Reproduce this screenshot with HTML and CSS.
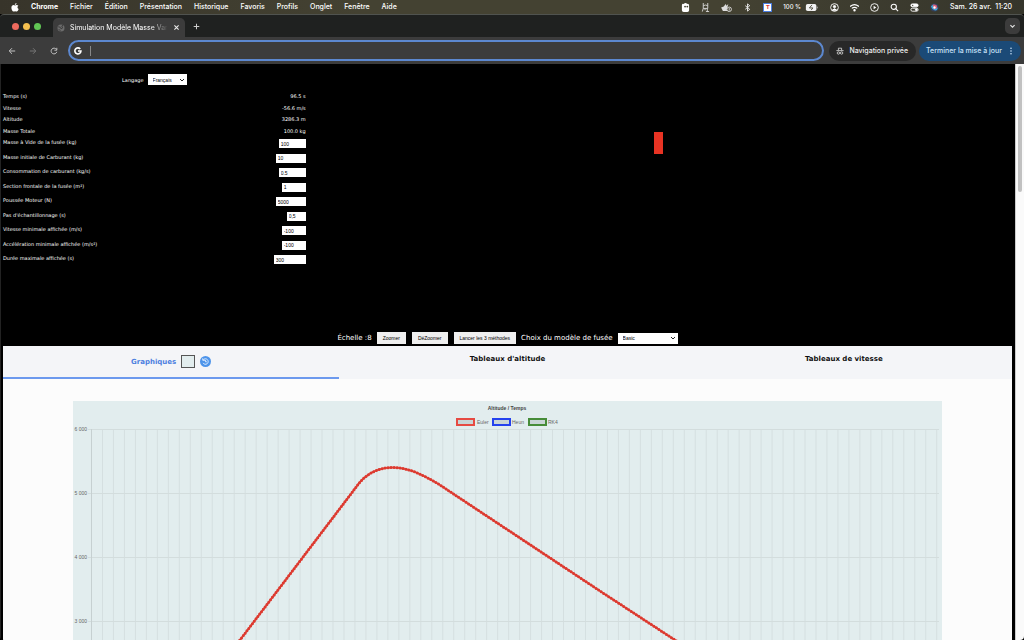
FILE: index.html
```
<!DOCTYPE html>
<html lang="fr">

<head>
    <meta charset="UTF-8">
    <meta name="viewport" content="width=device-width, initial-scale=1.0">
    <title>Simulation Modèle Masse Variable</title>
    <link rel="stylesheet" href="styles.css">
</head>

<body>
    <!-- Barre de menus -->
    <header class="menubar">
        <svg class="apple" viewBox="0 0 16 18" aria-hidden="true">
            <path d="M11 0c.2 2-1.500 4-3.300 4C7.500 2.200 9 .4 11 0zM8 5c.8 0 1.800-1 3.500-1 1.300 0 2.500.7 3.200 1.700-2.800 1.700-2.300 5.300.5 6.400C14.500 14.500 13 17 11.500 17c-1.200 0-1.700-.7-3.200-.7S6.300 17 5.200 17C2.800 17 .8 12.800.8 9.500.8 6 2.800 4.200 5 4.200 6.300 4.200 7.300 5 8 5z" fill="#fff"/>
        </svg>
        <nav class="menus">
            <strong>Chrome</strong>
            <span>Fichier</span>
            <span>Édition</span>
            <span>Présentation</span>
            <span>Historique</span>
            <span>Favoris</span>
            <span>Profils</span>
            <span>Onglet</span>
            <span>Fenêtre</span>
            <span>Aide</span>
        </nav>
        <div class="status">
            <svg viewBox="0 0 10 10"><path d="M1 2.500Q1 0 3 1q2-2 4 0 2-.5 2 2v5q0 2-2 2H3Q1 10 1 8z" fill="#fff"/><circle cx="4.500" cy="4" r="1" fill="#444232"/><circle cx="7" cy="4" r="1" fill="#444232"/></svg>
            <svg viewBox="0 0 10 10" fill="none" stroke="#ddd"><path d="M2.500 0v3M7.500 0v3M2.500 3q2.500-1.500 5 0v3h-5zM2.500 6L1.500 9.500M4.500 6v2M7 6v3.500M5.500 9.500h3.500"/></svg>
            <svg class="wide" viewBox="0 0 12 10"><path d="M0 5l3-1 2-3 1 2 2-2-1 4v4H2z" fill="#ddd"/><circle cx="9" cy="7" r="2.500" fill="#444232" stroke="#ddd"/><path d="M9 5.500v3" stroke="#ddd"/></svg>
            <svg viewBox="0 0 10 10" fill="none" stroke="#eee"><path d="M2.500 3l5 4L5 9V1l2.500 2-5 4"/></svg>
            <span class="badge">T</span>
            <span class="percent">100 %</span>
            <svg class="battery" viewBox="0 0 14 8"><rect width="12" height="8" rx="2" fill="#f2f2f2"/><path d="M13 3v2" stroke="#bbb"/><path d="M7 1L4 4.500h4L6 7" fill="none" stroke="#444232"/></svg>
            <svg viewBox="0 0 10 10" fill="none" stroke="#fff"><circle cx="5" cy="5" r="4.300"/><circle cx="5" cy="4" r="1.300" fill="#fff"/><path d="M2.500 8q2.500-3 5 0z" fill="#fff"/></svg>
            <svg viewBox="0 0 10 10" fill="none" stroke="#fff" stroke-width="1.300"><path d="M0 4q5-4.500 10 0M2 6q3-2.500 6 0"/><circle cx="5" cy="8" r=".7" fill="#fff"/></svg>
            <svg viewBox="0 0 10 10" fill="none" stroke="#fff"><circle cx="5" cy="5" r="4.300"/><path d="M4 3l3 2-3 2z" fill="#fff" stroke="none"/></svg>
            <svg viewBox="0 0 10 10" fill="none" stroke="#fff" stroke-width="1.200"><circle cx="4.200" cy="4.200" r="2.900"/><path d="M6.300 6.300L9 9"/></svg>
            <svg viewBox="0 0 10 10" fill="none" stroke="#fff"><rect x="1" y="1" width="8" height="3.300" rx="1.600" fill="#fff"/><rect x="1" y="5.800" width="8" height="3.300" rx="1.600"/><circle cx="3" cy="2.700" r=".7" fill="#444232" stroke="none"/><circle cx="7" cy="7.400" r="1" fill="#fff"/></svg>
            <svg viewBox="0 0 10 10"><circle cx="5" cy="5" r="4.500" fill="#34415f"/><path d="M1 4q3-4 5-1t3 2q-1 4-4 3T1 4z" fill="#3da5d8"/><path d="M3 2q5-1 5 3-2 3-4 1z" fill="#d85c78"/><circle cx="5" cy="5" r="1.300" fill="#fff"/></svg>
            <span class="clock">Sam. 26 avr. &nbsp;11:20</span>
        </div>
    </header>

    <div class="browser">
        <div class="tabstrip">
            <div class="lights"><i class="red"></i><i class="yellow"></i><i class="green"></i></div>
            <div class="browser-tab">
                <svg viewBox="0 0 10 10"><circle cx="5" cy="5" r="4.400" fill="#6c6c6c"/><path d="M1.500 3.500l2.500.5 1 2 2-1-1-2.500 1.500-1M2 7l2.500 1" fill="none" stroke="#3c3c3c" stroke-width="1.200"/></svg>
                <span class="tab-title">Simulation Modèle Masse Var</span>
                <button class="icon-btn" aria-label="Fermer l'onglet"><svg viewBox="0 0 10 10" fill="none" stroke="#eee" stroke-width="1.500"><path d="M2 2l6 6M8 2L2 8"/></svg></button>
            </div>
            <button class="icon-btn new-tab" aria-label="Nouvel onglet"><svg viewBox="0 0 10 10" fill="none" stroke="#ccc" stroke-width="1.500"><path d="M5 1v8M1 5h8"/></svg></button>
            <button class="tab-search" aria-label="Rechercher dans les onglets"><svg viewBox="0 0 10 10" fill="none" stroke="#ddd" stroke-width="1.800"><path d="M2 3l3 3 3-3"/></svg></button>
        </div>
        <div class="toolbar">
            <div class="nav-buttons">
                <button class="icon-btn" aria-label="Retour"><svg viewBox="0 0 10 10" fill="none" stroke="#c8c8c8" stroke-width="1.200"><path d="M9 5H2M5 1.500L1.500 5 5 8.500"/></svg></button>
                <button class="icon-btn" aria-label="Avancer"><svg viewBox="0 0 10 10" fill="none" stroke="#777" stroke-width="1.200"><path d="M1 5h7M5 1.500L8.500 5 5 8.500"/></svg></button>
                <button class="icon-btn" aria-label="Actualiser"><svg viewBox="0 0 10 10" fill="none" stroke="#c8c8c8" stroke-width="1.200"><path d="M8 3A3.600 3.600 0 1 0 8.500 6M8.500 1v3h-3"/></svg></button>
            </div>
            <label class="omnibox">
                <svg viewBox="0 0 10 10" fill="none" stroke="#fff" stroke-width="2"><path d="M7.800 2.400A3.800 3.800 0 1 0 8.700 5H5"/></svg>
                <i class="caret"></i>
                <input type="text" aria-label="Adresse">
            </label>
            <button class="chip private">
                <svg viewBox="0 0 10 10" fill="none" stroke="#ddd"><path d="M3 4V1.500h4V4M.5 4.500h9"/><circle cx="3" cy="7.500" r="1.500"/><circle cx="7" cy="7.500" r="1.500"/></svg>
                Navigation privée
            </button>
            <button class="chip update">
                Terminer la mise à jour
                <svg viewBox="0 0 10 10" fill="#c9e2fa"><circle cx="5" cy="1.500" r="1"/><circle cx="5" cy="5" r="1"/><circle cx="5" cy="8.500" r="1"/></svg>
            </button>
        </div>

        <div class="viewport">
            <main class="page">
                <section class="simulation">
                    <form class="panel">
                        <div class="language">
                            <label for="lang">Langage</label>
                            <select id="lang"><option>Français</option></select>
                        </div>
                        <div class="readouts">
                            <div><span>Temps (s)</span><output>96.5 s</output></div>
                            <div><span>Vitesse</span><output>-56.6 m/s</output></div>
                            <div><span>Altitude</span><output>3286.3 m</output></div>
                            <div><span>Masse Totale</span><output>100.0 kg</output></div>
                        </div>
                        <div class="params">
                            <div><label for="masse-vide">Masse à Vide de la fusée (kg)</label><input id="masse-vide" class="w-m" value="100"></div>
                            <div><label for="carburant">Masse initiale de Carburant (kg)</label><input id="carburant" class="w-l" value="10"></div>
                            <div><label for="conso">Consommation de carburant (kg/s)</label><input id="conso" class="w-m" value="0.5"></div>
                            <div><label for="section">Section frontale de la fusée (m²)</label><input id="section" class="w-s" value="1"></div>
                            <div><label for="poussee">Poussée Moteur (N)</label><input id="poussee" class="w-l" value="5000"></div>
                            <div><label for="pas">Pas d'échantillonnage (s)</label><input id="pas" class="w-xs" value="0,5"></div>
                            <div><label for="vmin">Vitesse minimale affichée (m/s)</label><input id="vmin" class="w-s" value="-100"></div>
                            <div><label for="amin">Accélération minimale affichée (m/s²)</label><input id="amin" class="w-s" value="-100"></div>
                            <div><label for="duree">Durée maximale affichée (s)</label><input id="duree" class="w-xl" value="300"></div>
                        </div>
                    </form>
                    <div class="stage"><div class="rocket"></div></div>
                </section>

                <div class="controls">
                    <span class="scale">Échelle :8</span>
                    <button>Zoomer</button>
                    <button>DéZoomer</button>
                    <button>Lancer les 3 méthodes</button>
                    <label for="modele">Choix du modèle de fusée</label>
                    <select id="modele"><option>Basic</option></select>
                </div>

                <section class="results">
                    <div class="tabs">
                        <div class="tab active">
                            <a href="#graphiques">Graphiques</a>
                            <input type="color" value="#e2edee" aria-label="Couleur de fond">
                            <button class="reset" aria-label="Réinitialiser"><svg viewBox="0 0 12 12"><circle cx="6" cy="6" r="6" fill="#4d94ea"/><path d="M3.500 4.300A3 3 0 1 1 3.300 7.500M3 2.500v2.200h2.500M6 4.500V6.300h1.500" fill="none" stroke="#e4f0ff"/></svg></button>
                        </div>
                        <div class="tab"><a href="#altitude">Tableaux d'altitude</a></div>
                        <div class="tab"><a href="#vitesse">Tableaux de vitesse</a></div>
                    </div>
                    <div class="charts" id="graphiques">
                        <svg class="chart" viewBox="0 0 869 430" role="img" aria-label="Altitude / Temps">
                            <defs>
                                <pattern id="grid" x="18" y="28" width="10.977" height="500" patternUnits="userSpaceOnUse">
                                    <path d="M.5 0v500" stroke="#d5dfe0"/>
                                </pattern>
                            </defs>
                            <rect class="chart-bg" width="869" height="430"/>
                            <rect x="18" y="28" width="847" height="388" fill="url(#grid)"/>
                            <path class="rules" d="M15 28.500h851M15 92.500h851M15 156.500h851M15 220.500h851M15 284.500h851M15 348.500h851M15 412.500h851"/>
                            <path class="axis" d="M18.500 28v388"/>

                            <text class="chart-title" x="434" y="9">Altitude / Temps</text>
                            <g class="legend">
                                <rect class="euler" x="384" y="18" width="17" height="6"/>
                                <text x="404" y="23">Euler</text>
                                <rect class="heun" x="420" y="18" width="17" height="6"/>
                                <text x="439" y="23">Heun</text>
                                <rect class="rk4" x="456" y="18" width="17" height="6"/>
                                <text x="475" y="23">RK4</text>
                            </g>
                            <g class="ticks">
                                <text x="14" y="30">6 000</text>
                                <text x="14" y="94">5 000</text>
                                <text x="14" y="158">4 000</text>
                                <text x="14" y="222">3 000</text>
                            </g>
                            <path class="curve" d="M18 412C80 350 130 286 167 239L287 81C296 71 308 66.500 319 66.500 337 66.500 352 75 367 84L527 190 602 239 860 412"/>
                            <path class="points" d="M18 412C80 350 130 286 167 239L287 81C296 71 308 66.500 319 66.500 337 66.500 352 75 367 84L527 190 602 239 860 412"/>
                        </svg>
                    </div>
                </section>
            </main>
            <div class="scrollbar"><div class="thumb"></div></div>
        </div>
    </div>
</body>

</html>
```
FILE: styles.css
```
* {
    box-sizing: border-box;
}

body {
    margin: 0;
    height: 100vh;
    display: flex;
    flex-direction: column;
    overflow: hidden;
    background: #000;
    color: #fff;
    font-family: Verdana, "DejaVu Sans", sans-serif;
}

button,
input,
select {
    margin: 0;
    padding: 0;
    border: 0;
    font: 5px Arial, "Liberation Sans", sans-serif;
}

svg {
    display: block;
    flex: none;
}

a {
    color: inherit;
    text-decoration: none;
}

/* Barre de menus */
.menubar {
    height: 14px;
    flex: none;
    display: flex;
    align-items: center;
    padding: 0 11px;
    background: linear-gradient(90deg, #37342a, #444232 35%, #444232 70%, #35352b);
    font: 500 7px/14px Inter, sans-serif;
    white-space: nowrap;
}

.apple {
    width: 8px;
    height: 9px;
}

.menus {
    display: flex;
    gap: 12px;
    margin-left: 12px;
}

.status {
    display: flex;
    align-items: center;
    gap: 11px;
    margin-left: auto;
}

.status svg {
    width: 9px;
    height: 9px;
}

.status .wide {
    width: 11px;
}

.status .battery {
    width: 14px;
    height: 7px;
    margin-left: -7px;
}

.badge {
    width: 9px;
    height: 9px;
    border: 1px solid #4a7de0;
    background: #fff;
    color: #d33;
    font: bold 6px/7px "Liberation Sans", sans-serif;
    text-align: center;
}

.percent {
    font-size: 6px;
}

.clock {
    margin-right: 1px;
}

/* Fenêtre du navigateur */
.browser {
    flex: 1;
    min-height: 0;
    display: flex;
    flex-direction: column;
    border-top: 1px solid #50534f;
    border-radius: 4px;
    overflow: hidden;
    background: #1f2120;
}

.tabstrip {
    height: 22px;
    flex: none;
    display: flex;
    align-items: center;
    padding: 0 4px 0 12px;
}

.lights {
    display: flex;
    gap: 4px;
}

.lights i {
    width: 7px;
    height: 7px;
    border-radius: 50%;
}

.red { background: #ed6a5e; }
.yellow { background: #f4bf4f; }
.green { background: #61c554; }

.browser-tab {
    width: 132px;
    height: 19px;
    align-self: flex-end;
    display: flex;
    align-items: center;
    gap: 5px;
    margin-left: 12px;
    padding: 0 5px 0 4px;
    border-radius: 5px 5px 0 0;
    background: #3c3c3c;
}

.browser-tab > svg {
    width: 8px;
    height: 8px;
}

.tab-title {
    flex: 1;
    overflow: hidden;
    font: 7px/12px Inter, sans-serif;
    white-space: nowrap;
    -webkit-mask-image: linear-gradient(90deg, #000 82%, transparent);
    mask-image: linear-gradient(90deg, #000 82%, transparent);
}

.icon-btn {
    width: 8px;
    height: 8px;
    background: none;
}

.icon-btn svg {
    width: 100%;
    height: 100%;
}

.browser-tab .icon-btn {
    width: 7px;
    height: 7px;
}

.new-tab {
    width: 7px;
    height: 7px;
    margin-left: 8px;
}

.tab-search {
    width: 15px;
    height: 16px;
    margin-left: auto;
    border-radius: 5px;
    background: #3c3c3c;
}

.tab-search svg {
    width: 7px;
    height: 7px;
    margin: 0 auto;
}

.toolbar {
    height: 27px;
    flex: none;
    display: flex;
    align-items: center;
    padding: 0 3px 0 8px;
    background: #3c3c3c;
}

.nav-buttons {
    display: flex;
    gap: 13px;
}

.omnibox {
    flex: 1;
    height: 21px;
    display: flex;
    align-items: center;
    margin: 0 5px 0 10px;
    padding: 0 5px;
    border: 2px solid #5c88d0;
    border-radius: 11px;
}

.omnibox svg {
    width: 8px;
    height: 8px;
    margin-left: -1px;
}

.omnibox input {
    flex: 1;
    background: none;
    color: #fff;
    outline: none;
}

.caret {
    width: 1px;
    height: 10px;
    margin-left: 8px;
    background: #888;
}

.chip {
    height: 20px;
    display: flex;
    align-items: center;
    gap: 5px;
    border-radius: 10px;
    color: #eee;
    font: 500 7px Inter, sans-serif;
    white-space: nowrap;
}

.chip svg {
    width: 8px;
    height: 8px;
}

.private {
    padding: 0 8px 0 7px;
    background: #282828;
}

.update {
    margin-left: 3px;
    padding: 0 6px 0 7px;
    background: #1b4a77;
    color: #c9e2fa;
}

/* Page */
.viewport {
    flex: 1;
    min-height: 0;
    display: flex;
    border-left: 1px solid #222;
    background: #000;
}

.page {
    flex: 1;
    overflow: hidden;
    padding: 0 3px 0 2px;
}

.scrollbar {
    width: 9px;
    padding: 2px 2px 0;
    border-left: 1px solid #ccc;
    background: #fafafa;
}

.thumb {
    width: 4px;
    height: 22%;
    border-radius: 2px;
    background: #c1c1c1;
}

.simulation {
    display: flex;
    min-height: 266px;
}

.panel {
    width: 30%;
    padding-top: 10px;
    font-size: 5px;
    line-height: 10px;
}

.language {
    display: flex;
    align-items: center;
    justify-content: center;
    gap: 4px;
}

select {
    height: 11px;
    padding: 0 5px;
    background: #fff url("data:image/svg+xml,%3Csvg xmlns='http://www.w3.org/2000/svg' width='6' height='4'%3E%3Cpath d='M1 1l2 2 2-2' fill='none' stroke='%23222'/%3E%3C/svg%3E") no-repeat right 2px center;
    color: #000;
    appearance: none;
}

#lang {
    width: 39px;
}

.readouts {
    display: grid;
    grid-auto-rows: 1fr;
    height: 46px;
    margin-top: 6px;
}

.readouts div,
.params div {
    display: flex;
    justify-content: space-between;
}

.params {
    display: grid;
    grid-auto-rows: 1fr;
    height: 131px;
}

.params input {
    height: 9px;
    margin-top: 2px;
    padding: 0 2px;
    background: #fff;
    color: #000;
}

.params .w-xs { width: 19px; }
.params .w-s { width: 24px; }
.params .w-m { width: 27px; }
.params .w-l { width: 30px; }
.params .w-xl { width: 32px; }

.stage {
    flex: 1;
    padding-top: 68px;
}

.rocket {
    width: 9px;
    height: 22px;
    margin: 0 auto;
    background: #e83323;
}

.controls {
    display: flex;
    align-items: center;
    justify-content: center;
    gap: 5px;
    height: 16px;
    font-size: 7px;
    white-space: nowrap;
}

.controls button {
    height: 12px;
    padding: 0 6px;
    background: #efefef;
    color: #000;
}

.controls button + button {
    margin-left: 1px;
}

.controls select {
    width: 60px;
}

/* Onglets */
.results {
    background: #fcfcfc;
    color: #111;
}

.tabs {
    display: grid;
    grid-template-columns: repeat(3, 1fr);
    background: #f4f5f8;
    font-size: 7px;
    font-weight: bold;
    line-height: 10px;
}

.tab {
    display: flex;
    justify-content: center;
    height: 33px;
    padding-top: 8px;
}

.tab.active {
    gap: 5px;
    align-items: center;
    padding-top: 0;
    border-bottom: 2px solid #6c99ee;
    color: #4c7fe0;
}

.tab input {
    width: 14px;
    height: 13px;
    border: 1px solid #555;
    background: #e2edee;
}

.tab input::-webkit-color-swatch-wrapper {
    padding: 0;
}

.tab input::-webkit-color-swatch {
    border: 0;
}

.reset {
    width: 11px;
    height: 11px;
    background: none;
}

.reset svg {
    width: 100%;
    height: 100%;
}

/* Graphique */
.charts {
    padding: 22px 70px 0;
}

.chart {
    width: 100%;
    font-family: "Liberation Sans", Arial, sans-serif;
    font-size: 5px;
}

.chart text {
    fill: #666;
}

.chart-bg {
    fill: #e2edee;
}

.rules {
    fill: none;
    stroke: #d3dddd;
}

.axis {
    stroke: #c6d0d1;
}

.chart .chart-title {
    fill: #444;
    font-weight: bold;
    text-anchor: middle;
}

.legend rect {
    fill: #c9d5d6;
    stroke-width: 2;
}

.legend .euler { stroke: #e64a42; }
.legend .heun { stroke: #2442ee; }
.legend .rk4 { stroke: #468c38; }

.ticks {
    text-anchor: end;
}

.curve,
.points {
    fill: none;
    stroke: #e25b50;
    stroke-width: 2;
}

.points {
    stroke: #dc392f;
    stroke-width: 3;
    stroke-linecap: round;
    stroke-dasharray: 0 3;
}
```
